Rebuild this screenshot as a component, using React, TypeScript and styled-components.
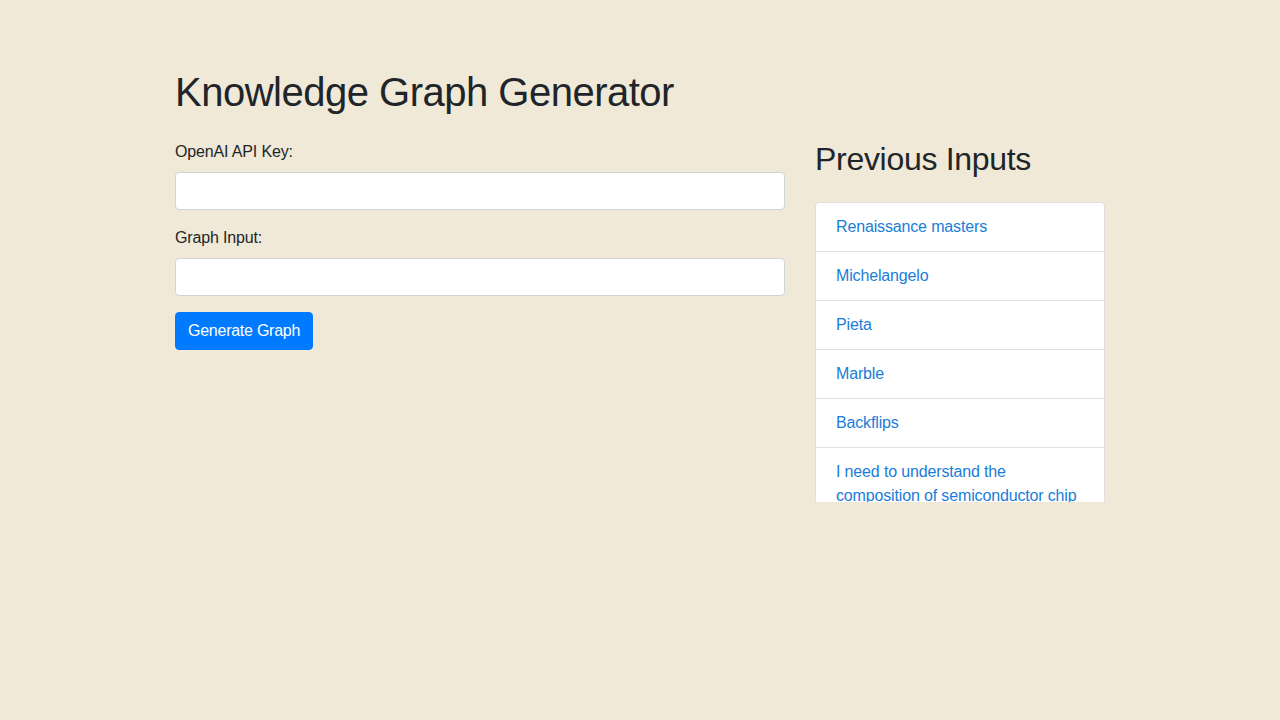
import React from "react";
import styled, { createGlobalStyle } from "styled-components";

const GlobalStyle = createGlobalStyle`
  html, body {
    margin: 0;
    padding: 0;
    background: #f0e9d7;
  }
  body {
    font-family: "Liberation Sans", Arial, sans-serif;
    font-size: 16px;
    line-height: 1.5;
    letter-spacing: -0.15px;
    color: #212529;
  }
  *, *::before, *::after { box-sizing: border-box; }
`;

const Container = styled.div`
  width: 960px;
  margin: 0 auto;
  padding: 68px 15px 0;
`;

const Title = styled.h1`
  margin: 0 0 23px;
  font-size: 40px;
  font-weight: 400;
  line-height: 48px;
  letter-spacing: -0.5px;
`;

const Row = styled.div`
  display: grid;
  grid-template-columns: 610px 290px;
  column-gap: 30px;
  align-items: start;
`;

const Form = styled.form`
  display: flex;
  flex-direction: column;
`;

const FieldGroup = styled.div`
  display: flex;
  flex-direction: column;
  margin-bottom: 15px;
`;

const Label = styled.label`
  padding-top: 1px;
  margin-bottom: 8px;
  line-height: 24px;
`;

const Input = styled.input`
  height: 38px;
  padding: 6px 12px;
  font: inherit;
  color: #495057;
  background: #fff;
  border: 1px solid #ced4da;
  border-radius: 4px;
  outline: none;
`;

const Button = styled.button`
  align-self: flex-start;
  height: 38px;
  margin-top: 1px;
  padding: 6px 12px;
  font: inherit;
  line-height: 24px;
  letter-spacing: -0.25px;
  color: #fff;
  background: #007bff;
  border: 1px solid #007bff;
  border-radius: 4px;
  cursor: pointer;
`;

const Side = styled.aside`
  padding-top: 1px;
`;

const SideTitle = styled.h2`
  margin: 0 0 24px;
  font-size: 32px;
  font-weight: 400;
  line-height: 38px;
  letter-spacing: -0.3px;
`;

const List = styled.ul`
  margin: 0;
  padding: 0;
  list-style: none;
  max-height: 300px;
  overflow: hidden;
  border: 1px solid rgba(0, 0, 0, 0.125);
  border-bottom: none;
  border-radius: 4px 4px 0 0;
  background: #fff;
`;

const Item = styled.li`
  padding: 12px 20px;
  line-height: 24px;
  border-bottom: 1px solid rgba(0, 0, 0, 0.125);
`;

const ItemLink = styled.a`
  color: #1a7dd8;
  text-decoration: none;
`;

const inputs = [
  "Renaissance masters",
  "Michelangelo",
  "Pieta",
  "Marble",
  "Backflips",
  "I need to understand the composition of semiconductor chip manufacturing and its supply chain",
];

export default function App() {
  return (
    <>
      <GlobalStyle />
      <Container>
        <Title>Knowledge Graph Generator</Title>
        <Row>
          <Form onSubmit={(e) => e.preventDefault()}>
            <FieldGroup>
              <Label htmlFor="apikey">OpenAI API Key:</Label>
              <Input id="apikey" type="password" />
            </FieldGroup>
            <FieldGroup>
              <Label htmlFor="graphinput">Graph Input:</Label>
              <Input id="graphinput" type="text" />
            </FieldGroup>
            <Button type="submit">Generate Graph</Button>
          </Form>
          <Side>
            <SideTitle>Previous Inputs</SideTitle>
            <List>
              {inputs.map((t) => (
                <Item key={t}>
                  <ItemLink href="#">{t}</ItemLink>
                </Item>
              ))}
            </List>
          </Side>
        </Row>
      </Container>
    </>
  );
}
